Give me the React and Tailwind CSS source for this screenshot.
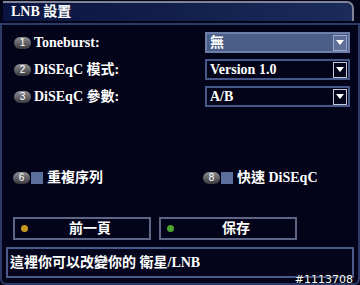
import React from "react";

const Badge = ({ n }) => (
  <span className="flex h-[12px] w-[17px] shrink-0 items-center justify-center rounded-full bg-gradient-to-b from-[#909094] to-[#3a3a3e] font-['Liberation_Sans'] text-[10px] font-normal leading-none text-white">
    {n}
  </span>
);

const Arrow = ({ active }) => (
  <span
    className={
      "flex h-[16px] w-[14px] items-center justify-center border " +
      (active ? "border-[#9aa6c6] bg-[#5d6f97]" : "border-[#c4c9da] bg-[#05061c]")
    }
  >
    <svg width="8" height="5" viewBox="0 0 8 5">
      <path d="M0 0h8L4 5z" fill="#ffffff" />
    </svg>
  </span>
);

const Select = ({ value, active }) => (
  <div
    className={
      "flex h-[21px] w-[145px] items-center justify-between border-2 pl-[3px] pr-[1px] " +
      (active ? "border-[#6d7fa8] bg-[#4b5e87]" : "border-[#46588a] bg-[#03041a]")
    }
  >
    <span className="text-[14px] font-bold leading-none text-white">{value}</span>
    <Arrow active={active} />
  </div>
);

const rows = [
  { n: 1, label: "Toneburst:", value: "無", active: true },
  { n: 2, label: "DiSEqC 模式:", value: "Version 1.0" },
  { n: 3, label: "DiSEqC 參數:", value: "A/B" },
];

export default function App() {
  return (
    <div className="relative flex h-[285px] w-[360px] flex-col overflow-hidden bg-[#03041a] font-['Liberation_Serif','Noto_Sans_CJK_TC',serif] text-white">
      <div className="ml-[3px] mr-[6px] mt-[1px] flex h-[20px] items-center rounded-tr-[7px] border-r-2 border-t-2 border-[#7f8594] bg-gradient-to-r from-[#0a1440] to-[#1b2b5a] pl-[8px]">
        <span className="text-[14px] font-bold leading-none">LNB 設置</span>
      </div>
      <div className="mt-[2px] flex flex-1 flex-col rounded-b-[6px] border-2 border-[#2e3b68] pb-[3px]">
        <div className="flex flex-col gap-[6px] pl-[12px] pr-[8px] pt-[7px]">
          {rows.map((r) => (
            <div key={r.n} className="flex h-[21px] items-center">
              <Badge n={r.n} />
              <span className="ml-[3px] flex-1 text-[14px] font-bold leading-none">{r.label}</span>
              <Select value={r.value} active={r.active} />
            </div>
          ))}
        </div>

        <div className="mt-[64px] flex h-[14px] items-center pl-[11px]">
          <div className="flex w-[190px] items-center">
            <Badge n={6} />
            <span className="ml-[1px] h-[12px] w-[12px] bg-[#5b6f9c]" />
            <span className="ml-[4px] text-[14px] font-bold leading-none">重複序列</span>
          </div>
          <div className="flex items-center">
            <Badge n={8} />
            <span className="ml-[1px] h-[12px] w-[12px] bg-[#5b6f9c]" />
            <span className="ml-[4px] text-[14px] font-bold leading-none">快速 DiSEqC</span>
          </div>
        </div>

        <div className="mt-[32px] flex gap-[8px] pl-[11px]">
          <div className="flex h-[23px] w-[138px] items-center border-2 border-[#5f6584] pl-[6px]">
            <span className="h-[7px] w-[7px] rounded-full bg-[#c59a1c]" />
            <span className="flex-1 pl-[3px] text-center text-[14px] font-bold leading-none">前一頁</span>
          </div>
          <div className="flex h-[23px] w-[138px] items-center border-2 border-[#5f6584] pl-[6px]">
            <span className="h-[7px] w-[7px] rounded-full bg-[#4aa52e]" />
            <span className="flex-1 pl-[3px] text-center text-[14px] font-bold leading-none">保存</span>
          </div>
        </div>

        <div className="mx-[4px] mt-[7px] flex h-[31px] items-center border-2 border-[#4a5a8c] bg-[#05061e] pl-[2px]">
          <span className="text-[14px] font-bold leading-none">這裡你可以改變你的 衛星/LNB</span>
        </div>
      </div>
      <span className="absolute bottom-[0px] right-[7px] font-['DejaVu_Sans',sans-serif] text-[11px] leading-none text-white [text-shadow:0_0_2px_#000,0_0_1px_#000]">
        #1113708
      </span>
    </div>
  );
}
